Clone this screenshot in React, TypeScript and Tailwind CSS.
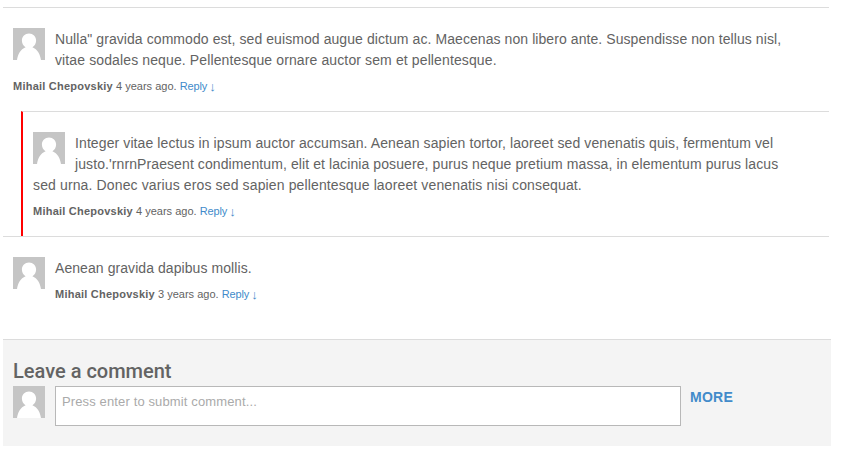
import React from "react";

function Avatar({ className = "" }: { className?: string }) {
  return (
    <svg viewBox="0 0 32 32" className={`h-8 w-8 shrink-0 ${className}`} aria-hidden="true">
      <rect width="32" height="32" fill="#c5c5c5" />
      <path
        d="M4 32C4.8 26.5 7.5 21.2 12.6 19.2C10.3 17.8 8.9 15.6 8.9 12.6C8.9 8.6 12 5.6 16 5.6C20 5.6 23.1 8.6 23.1 12.6C23.1 15.6 21.7 17.8 19.4 19.2C24.5 21.2 27.2 26.5 28 32Z"
        fill="#fff"
      />
    </svg>
  );
}

type Line = { text: string; tracking: string };

type CommentProps = {
  lines: Line[];
  age: string;
  className?: string;
};

function Comment({ lines, age, className = "" }: CommentProps) {
  return (
    <article className={`border-t border-[#dcdcdc] pt-5 pr-5 ${className}`}>
      <Avatar className="float-left mr-2.5" />
      <p className="pt-px text-sm leading-[21px]">
        {lines.map((line, i) => (
          <React.Fragment key={line.text}>
            {i > 0 && <br />}
            <span className={line.tracking}>{line.text}</span>
          </React.Fragment>
        ))}
      </p>
      <p className="mt-[5px] h-[21px] text-[11px] leading-[21px]">
        <strong className="tracking-[0.235px]">Mihail Chepovskiy</strong> {age}.{" "}
        <a href="#reply" className="text-[#428bca]">
          <span className="tracking-[-0.1px]">Reply</span>{" "}
          <span className="-ml-px align-[-1px] text-[13px] leading-none">↓</span>
        </a>
      </p>
    </article>
  );
}

export default function App() {
  return (
    <main className="h-[453px] overflow-hidden bg-white pt-[7px] pl-[3px] font-['Liberation_Sans',Arial,sans-serif] text-[#636363]">
      <section className="w-[826px]">
        <Comment
          className="pb-3.5 pl-2.5"
          lines={[
            {
              text: 'Nulla" gravida commodo est, sed euismod augue dictum ac. Maecenas non libero ante. Suspendisse non tellus nisl,',
              tracking: "tracking-[0.075px]",
            },
            {
              text: "vitae sodales neque. Pellentesque ornare auctor sem et pellentesque.",
              tracking: "tracking-[0.12px]",
            },
          ]}
          age="4 years ago"
        />
        <Comment
          className="ml-[18px] border-l-2 border-l-[#ff0000] pb-3.5 pl-2.5"
          lines={[
            {
              text: "Integer vitae lectus in ipsum auctor accumsan. Aenean sapien tortor, laoreet sed venenatis quis, fermentum vel",
              tracking: "tracking-[0.1px]",
            },
            {
              text: "justo.'rnrnPraesent condimentum, elit et lacinia posuere, purus neque pretium massa, in elementum purus lacus",
              tracking: "tracking-[0.095px]",
            },
            {
              text: "sed urna. Donec varius eros sed sapien pellentesque laoreet venenatis nisi consequat.",
              tracking: "tracking-[0.13px]",
            },
          ]}
          age="4 years ago"
        />
        <Comment
          className="pb-[34px] pl-2.5"
          lines={[{ text: "Aenean gravida dapibus mollis.", tracking: "tracking-[0.07px]" }]}
          age="3 years ago"
        />
      </section>
      <section className="h-[107px] w-[828px] border-t border-[#dcdcdc] bg-[#f4f4f4] pt-5 pl-2.5">
        <h2 className="font-[Roboto,sans-serif] text-xl leading-[22px] font-medium">Leave a comment</h2>
        <div className="mt-1 flex items-start">
          <Avatar />
          <textarea
            placeholder="Press enter to submit comment..."
            className="ml-2.5 block h-10 w-[626px] resize-none border border-[#b8b8b8] bg-white px-1.5 py-[5px] text-[13px] leading-5 tracking-[0.13px] placeholder:text-[#aaa]"
          />
          <a href="#more" className="ml-[9px] pt-px text-sm leading-[21px] font-bold tracking-[0.25px] text-[#428bca]">
            MORE
          </a>
        </div>
      </section>
    </main>
  );
}
